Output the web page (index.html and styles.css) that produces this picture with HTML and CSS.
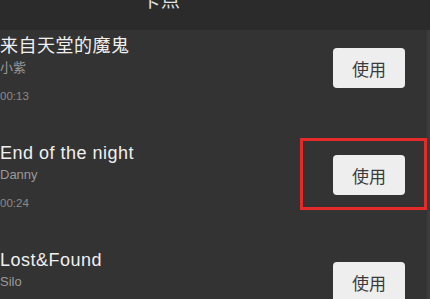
FILE: index.html
```html
<!DOCTYPE html>
<html lang="zh">
<head>
<meta charset="utf-8">
<link rel="stylesheet" href="styles.css">
</head>
<body>
<div class="screen">
  <header class="header"><span class="header-title">卡点</span></header>
  <ul class="list">
    <li class="row">
      <div class="info">
        <div class="title">来自天堂的魔鬼</div>
        <div class="artist">小紫</div>
        <div class="time">00:13</div>
      </div>
      <button class="use">使用</button>
    </li>
    <li class="row">
      <div class="info">
        <div class="title">End of the night</div>
        <div class="artist">Danny</div>
        <div class="time">00:24</div>
      </div>
      <button class="use">使用</button>
      <div class="highlight"></div>
    </li>
    <li class="row">
      <div class="info">
        <div class="title">Lost&amp;Found</div>
        <div class="artist">Silo</div>
        <div class="time">00:31</div>
      </div>
      <button class="use">使用</button>
    </li>
  </ul>
</div>
</body>
</html>
```
FILE: styles.css
```css
html, body {
  margin: 0;
  padding: 0;
  background: #333333;
  height: 100%;
  overflow: hidden;
}
.screen {
  font-family: "Liberation Sans", "Noto Sans CJK SC", sans-serif;
  width: 430px;
  height: 299px;
  overflow: hidden;
  background: #333333;
  box-shadow: inset -3px 0 0 #3b3b3b;
}
.header {
  height: 30px;
  background: #2b2b2b;
  overflow: hidden;
  padding-left: 141px;
}
.header-title {
  display: block;
  margin-top: -9px;
  font-size: 19px;
  line-height: 20px;
  color: #e6e6e6;
  letter-spacing: 1px;
}
.list {
  list-style: none;
  margin: 0;
  padding: 0;
}
.row {
  position: relative;
  height: 107px;
  display: flex;
  justify-content: space-between;
  align-items: flex-start;
  padding-right: 25px;
}
.info {
  display: flex;
  flex-direction: column;
  padding-top: 6px;
}
.title {
  font-size: 18px;
  line-height: 20px;
  color: #f0f0f0;
  letter-spacing: 0.5px;
}
.artist {
  margin-top: 4px;
  font-size: 13px;
  line-height: 16px;
  color: #9a9a9a;
}
.time {
  margin-top: 13px;
  font-size: 11.5px;
  line-height: 14px;
  color: #8a8a8a;
}
.use {
  margin-top: 18px;
  width: 72px;
  height: 40px;
  border: none;
  border-radius: 4px;
  background: #eeeeee;
  color: #3a3a3a;
  font-family: "Noto Sans CJK SC", sans-serif;
  font-size: 17px;
  padding: 0;
}
.highlight {
  position: absolute;
  left: 300px;
  top: 1px;
  width: 121px;
  height: 66px;
  border: 3px solid #e52a2a;
}
```
